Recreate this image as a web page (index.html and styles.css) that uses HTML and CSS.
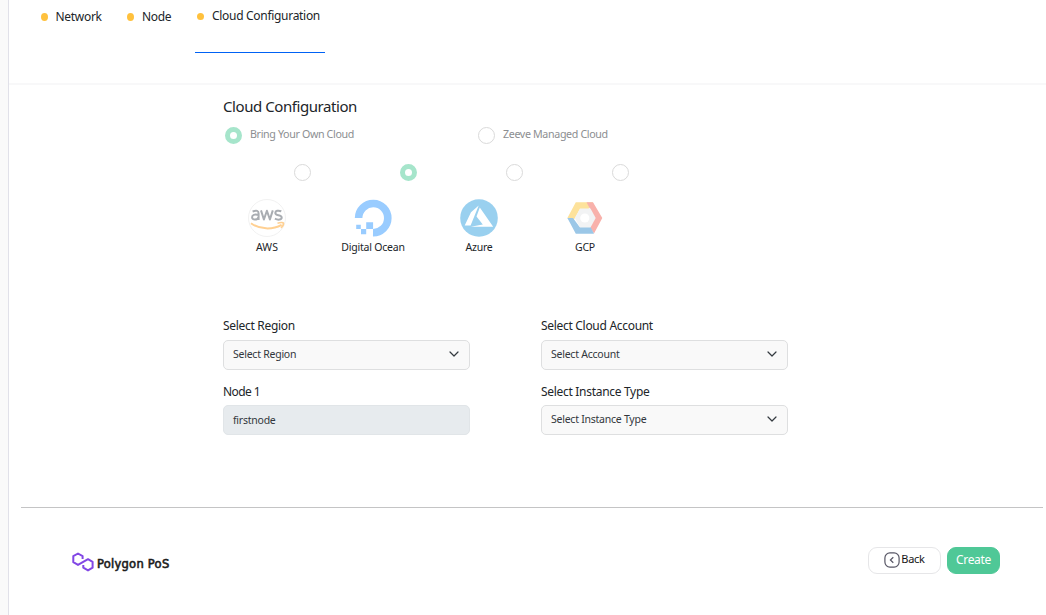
FILE: index.html
```html
<!DOCTYPE html>
<html lang="en">
<head>
<meta charset="utf-8">
<title>Cloud Configuration</title>
<link rel="stylesheet" href="styles.css">
</head>
<body>
<div class="shell">
  <aside class="rail"></aside>
  <main class="page">
    <nav class="steps">
      <a class="step step-network"><i class="dot"></i><span class="t-network">Network</span></a>
      <a class="step step-node"><i class="dot"></i><span class="t-node">Node</span></a>
      <a class="step step-active"><i class="dot"></i><span class="t-cloud">Cloud Configuration</span></a>
    </nav>
    <section class="config">
      <h1 class="title"><span>Cloud Configuration</span></h1>
      <div class="modes">
        <label class="mode"><i class="radio on"></i><span class="t-own">Bring Your Own Cloud</span></label>
        <label class="mode"><i class="radio"></i><span class="t-managed">Zeeve Managed Cloud</span></label>
      </div>
      <div class="providers">
        <div class="provider">
          <i class="radio"></i>
          <svg class="logo" viewBox="0 0 38 38">
            <circle cx="19" cy="19" r="18.5" fill="#fff" stroke="#ededee" stroke-width=".8"/>
            <g fill="none" stroke="#a9adb2" stroke-width="2" stroke-linejoin="round">
              <path d="M4.600 12.500q6-2.200 6 2v6.500M10.500 16c-4-1-6.400 0-6.400 2.300 0 3.200 5.200 2.900 6.400 0"/>
              <path d="M13 11.400l2.900 9.100 3-8.800 3 8.800 2.900-9.100"/>
              <path d="M33.300 12.300c-3-1.200-6-.6-6 1.700 0 3 6.400 1.400 6.400 4.500 0 2.500-3.800 2.700-6.800 1.200"/>
            </g>
            <path d="M3 24.300c8.500 6.400 21.500 6.600 30.600 1.500" fill="none" stroke="#ffd092" stroke-width="2"/>
            <path d="M29.500 24.200c3-.9 5.700-.9 5.900-.2.200 1-.7 3.500-2.400 5" fill="none" stroke="#ffd092" stroke-width="1.600"/>
          </svg>
          <span class="name t-aws">AWS</span>
        </div>
        <div class="provider">
          <i class="radio on"></i>
          <svg class="logo" viewBox="0 0 38 38">
            <path d="M4.600 19A14.600 14.600 0 1 1 19 33.700" fill="none" stroke="#99ccff" stroke-width="7.600"/>
            <path d="M12.200 23.200h6.900v6.900h-6.900zM7 30h5.200v5.300H7zM2.200 25.800h4.600V30H2.200z" fill="#99ccff"/>
          </svg>
          <span class="name t-do">Digital Ocean</span>
        </div>
        <div class="provider">
          <i class="radio"></i>
          <svg class="logo" viewBox="0 0 38 38">
            <circle cx="19" cy="19" r="18.800" fill="#99d0ef"/>
            <path d="M18.700 6.500L11 13.300 4.700 26.400h5.900zM19.800 8.500L16.500 17.600 22.800 25.500 10.700 27.700H33.200z" fill="#fff"/>
          </svg>
          <span class="name t-azure">Azure</span>
        </div>
        <div class="provider">
          <i class="radio"></i>
          <svg class="logo" viewBox="0 0 38 38">
            <path d="M9.800 3.300H27L22.500 10H14l-5 9-3.300 4.400L1.400 19z" fill="#fde29b"/>
            <path d="M27 3.300L36.300 19 28 34.500 23.400 27.500 28.800 19 20.500 3.300z" fill="#f8b1ab"/>
            <path d="M7 19L1.400 19 9.800 34.800H28L24.500 27.800H13.500z" fill="#9bc7e7"/>
            <path d="M14 9.600h10.500L29.700 19l-5.200 9.400H14L8.800 19z" fill="#f2f3f4"/>
            <circle cx="18.800" cy="19" r="4.600" fill="#fff"/>
          </svg>
          <span class="name t-gcp">GCP</span>
        </div>
      </div>
      <form class="fields">
        <div class="field"><label class="l-region">Select Region</label><div class="control"><span class="v-region">Select Region</span><svg class="chev" viewBox="0 0 10 6"><path d="M1 1l4 4 4-4"/></svg></div></div>
        <div class="field"><label class="l-account">Select Cloud Account</label><div class="control"><span class="v-account">Select Account</span><svg class="chev" viewBox="0 0 10 6"><path d="M1 1l4 4 4-4"/></svg></div></div>
        <div class="field second"><label class="l-node">Node 1</label><div class="control disabled"><span class="v-node">firstnode</span></div></div>
        <div class="field second"><label class="l-type">Select Instance Type</label><div class="control"><span class="v-type">Select Instance Type</span><svg class="chev" viewBox="0 0 10 6"><path d="M1 1l4 4 4-4"/></svg></div></div>
      </form>
    </section>
    <footer class="footer">
      <div class="brand">
        <svg class="brand-mark" viewBox="0 0 22 20"><path d="M10.600 7V4.200L6 1.500 1.300 4.200v6L6 12.900l10-5.700 4.600 2.700v5.800L16 18.400l-4.700-2.700V12.900"/></svg>
        <span class="brand-name">Polygon PoS</span>
      </div>
      <div class="actions">
        <button class="btn back"><svg class="back-icon" viewBox="0 0 16 16"><rect x=".9" y=".9" width="14.200" height="14.200" rx="5"/><path d="M9.300 5.200L6.400 8l2.900 2.800"/></svg><span>Back</span></button>
        <button class="btn create"><span>Create</span></button>
      </div>
    </footer>
  </main>
</div>
</body>
</html>
```
FILE: styles.css
```css
* { box-sizing: border-box; }
body { margin: 0; background: #fff; color: #212529; font-family: "Noto Sans", sans-serif; overflow: hidden; }
span, label { white-space: nowrap; }
.shell { display: flex; height: 615px; }
.rail { width: 9px; background: #fafafa; border-right: 1px solid #e1e1e9; }
.page { flex: 1; display: flex; flex-direction: column; }
.steps { display: flex; height: 85px; padding-left: 32px; border-bottom: 2px solid #f8f8f9; font-size: 12px; line-height: 16px; letter-spacing: -.3px; }
.step { display: flex; align-items: center; height: 16px; margin-top: 9px; }
.dot { width: 7px; height: 8px; border-radius: 50%; background: #ffc13d; }
.step-network { width: 86px; gap: 7.5px; }
.step-node { width: 68px; gap: 8px; }
.step-active { width: 130px; height: 53px; margin-top: 0; padding: 8px 0 0 2px; align-items: flex-start; gap: 8px; border-bottom: 1px solid #0062f5; }
.step-active .dot { height: 7px; margin-top: 5px; }
.config { height: 422px; padding: 10px 0 0 214px; }
.title { margin: 0; font-size: 15px; line-height: 22px; font-weight: 400; letter-spacing: -.43px; }
.modes { display: grid; grid-template-columns: 253px 253px; margin-top: 8px; padding-left: 2px; }
.mode { display: flex; align-items: center; gap: 8px; height: 20px; font-size: 10.7px; line-height: 18px; color: #8c8e91; letter-spacing: -.36px; }
.mode span { margin-top: -3px; }
.radio { display: block; flex: none; width: 17px; height: 17px; border: 1px solid #dadada; border-radius: 50%; background: #fff; }
.radio.on { border: 5px solid #a6e5cb; }
.providers { display: grid; grid-template-columns: repeat(4, 106px); margin-top: 19px; }
.provider { display: flex; flex-direction: column; align-items: center; width: 88px; }
.provider .radio { align-self: flex-end; }
.logo { width: 38px; height: 38px; margin-top: 18px; }
.name { margin-top: 2px; font-size: 10.5px; line-height: 16px; letter-spacing: -.22px; }
.t-aws { letter-spacing: .1px; }
.fields { display: grid; grid-template-columns: 247px 247px; column-gap: 71px; row-gap: 12px; margin-top: 62px; }
.field { height: 53px; }
.field label { display: block; height: 23px; font-size: 12px; line-height: 18px; letter-spacing: -.3px; }
.second label { padding-top: 1px; }
.field .l-node { letter-spacing: -.6px; }
.control { display: flex; align-items: center; justify-content: space-between; height: 30px; padding: 0 10px 2px 9px; border: 1px solid #dedfe0; border-radius: 5px; background: #f9f9f9; font-size: 10.5px; color: #32373c; letter-spacing: -.24px; }
.control.disabled { padding-bottom: 0; background: #e7ebee; border-color: #e1e5e8; }
.chev { width: 10px; height: 6px; fill: none; stroke: #343a40; stroke-width: 1.2; stroke-linecap: round; stroke-linejoin: round; }
.footer { display: flex; justify-content: space-between; flex: 1; margin: 0 3px 0 12px; padding: 39px 43px 0 51px; border-top: 1px solid #c4c4c5; }
.brand { display: flex; align-items: center; gap: 3px; height: 30px; }
.brand-mark { width: 22px; height: 20px; fill: none; stroke: #8247e5; stroke-width: 2; stroke-linejoin: round; }
.brand-name { font-family: "DejaVu Sans", Verdana, sans-serif; font-size: 11.5px; line-height: 18px; margin-top: 4px; color: #1c1c1c; -webkit-text-stroke: .6px #1c1c1c; letter-spacing: .25px; }
.actions { display: flex; gap: 6px; }
.btn { display: flex; align-items: center; justify-content: center; height: 27px; padding: 0 0 2px; border: 1px solid #e6e6e8; border-radius: 9px; font: 11px/18px "Noto Sans", sans-serif; letter-spacing: -.3px; }
.back { width: 73px; gap: 1px; background: #fff; color: #151515; }
.back span { margin-top: -1px; }
.back-icon { width: 16px; height: 16px; fill: none; stroke: #575665; stroke-width: 1.2; }
.create { width: 53px; background: #4fc897; border-color: #4fc897; color: #fff; font-size: 12px; }
```
